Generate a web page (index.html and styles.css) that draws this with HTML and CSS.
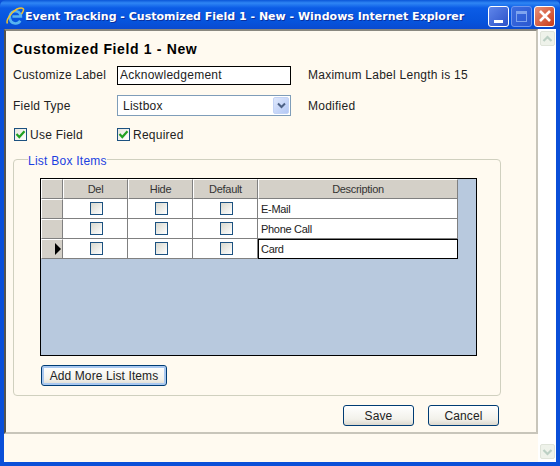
FILE: index.html
```html
<!DOCTYPE html>
<html lang="en">
<head>
  <meta charset="UTF-8">
  <title>Event Tracking - Customized Field 1 - New</title>
  <link rel="stylesheet" href="styles.css">
</head>
<body>
  <div class="window">
    <div class="titlebar">
      <svg class="ie-logo" width="20" height="20" viewBox="0 0 20 20">
        <path d="M5 12.500a5.600 5.600 0 1 1 10.900-2H7.400M5 12.500a5.600 5.600 0 0 0 10.300 2.300" fill="none" stroke="#58b4f0" stroke-width="2.600"/>
        <path d="M2.500 17.500C.500 15 6 6 12 3c3-1.500 6-1.500 6.500 0 .4 1.200-.6 3-2 5" fill="none" stroke="#f2c230" stroke-width="1.500"/>
      </svg>
      <span class="title">Event Tracking - Customized Field 1 - New - Windows Internet Explorer</span>
      <div class="caption-buttons">
        <div class="cap-btn"><span class="cap-min"></span></div>
        <div class="cap-btn cap-disabled"><span class="cap-max"></span></div>
        <div class="cap-btn cap-close">
          <svg width="14" height="14" viewBox="0 0 14 14"><path d="M2 2l10 10M12 2L2 12" stroke="#fff" stroke-width="2.600"/></svg>
        </div>
      </div>
    </div>

    <div class="client">
      <div class="main">
        <div class="panel">
          <h1>Customized Field 1 - New</h1>

          <div class="form-row row-label">
            <label class="field-label">Customize Label</label>
            <input class="text-input" type="text" value="Acknowledgement">
            <span class="note">Maximum Label Length is 15</span>
          </div>

          <div class="form-row row-type">
            <label class="field-label">Field Type</label>
            <div class="select">
              <span class="select-value">Listbox</span>
              <span class="select-arrow">
                <svg width="9" height="7" viewBox="0 0 9 7"><path d="M1 1.500l3.500 3.500 3.500-3.500" fill="none" stroke="#4d6185" stroke-width="2"/></svg>
              </span>
            </div>
            <span class="note">Modified</span>
          </div>

          <div class="form-row row-checks">
            <div class="check-item check-use">
              <span class="check">
                <svg width="11" height="11" viewBox="0 0 11 11"><path d="M1.500 5l2.800 3L9.500 2.200" fill="none" stroke="#21a121" stroke-width="2.200"/></svg>
              </span>
              <span>Use Field</span>
            </div>
            <div class="check-item">
              <span class="check">
                <svg width="11" height="11" viewBox="0 0 11 11"><path d="M1.500 5l2.800 3L9.500 2.200" fill="none" stroke="#21a121" stroke-width="2.200"/></svg>
              </span>
              <span>Required</span>
            </div>
          </div>

          <fieldset class="items-box">
            <legend>List Box Items</legend>
            <div class="grid-view">
              <div class="grid">
                <div class="cell head"></div>
                <div class="cell head">Del</div>
                <div class="cell head">Hide</div>
                <div class="cell head">Default</div>
                <div class="cell head">Description</div>

                <div class="cell row-head"></div>
                <div class="cell"><span class="box"></span></div>
                <div class="cell"><span class="box"></span></div>
                <div class="cell"><span class="box"></span></div>
                <div class="cell desc">E-Mail</div>

                <div class="cell row-head"></div>
                <div class="cell"><span class="box"></span></div>
                <div class="cell"><span class="box"></span></div>
                <div class="cell"><span class="box"></span></div>
                <div class="cell desc">Phone Call</div>

                <div class="cell row-head current"><span class="pointer"></span></div>
                <div class="cell"><span class="box"></span></div>
                <div class="cell"><span class="box"></span></div>
                <div class="cell"><span class="box"></span></div>
                <div class="cell desc active">Card</div>
              </div>
            </div>
            <button class="btn btn-add" type="button">Add More List Items</button>
          </fieldset>

          <div class="actions">
            <button class="btn btn-action" type="button">Save</button>
            <button class="btn btn-action" type="button">Cancel</button>
          </div>
        </div>
        <div class="statusbar"></div>
      </div>

      <div class="scrollbar">
        <div class="scroll-btn">
          <svg width="11" height="8" viewBox="0 0 11 8"><path d="M1.500 6l4-4 4 4" fill="none" stroke="#bcd0c4" stroke-width="2.200"/></svg>
        </div>
        <div class="scroll-btn">
          <svg width="11" height="8" viewBox="0 0 11 8"><path d="M1.500 2l4 4 4-4" fill="none" stroke="#bcd0c4" stroke-width="2.200"/></svg>
        </div>
      </div>
    </div>
  </div>
</body>
</html>
```

FILE: styles.css
```css
* {
  box-sizing: border-box;
}
body {
  margin: 0;
  font-family: "Liberation Sans", Arial, sans-serif;
  font-size: 12px;
  color: #222;
}
.window {
  width: 560px;
  height: 466px;
  display: flex;
  flex-direction: column;
  background: #0a4fd8;
  padding: 0 4px 4px;
}
.titlebar {
  height: 29px;
  flex: none;
  margin: 0 -4px;
  padding: 3px 5px 0 5px;
  display: flex;
  align-items: center;
  background: linear-gradient(#0a56d8 0, #2f86f4 3px, #0b5ce6 8px, #0653dc 22px, #0a4ad0 29px);
  border-radius: 6px 6px 0 0;
}
.ie-logo {
  flex: none;
}
.title {
  flex: 1;
  min-width: 0;
  font-family: "DejaVu Sans", sans-serif;
  font-size: 11px;
  font-weight: bold;
  color: #fff;
  white-space: nowrap;
  text-shadow: 1px 1px #0a2f9c;
}
.caption-buttons {
  display: flex;
  flex: none;
  gap: 2px;
}
.cap-btn {
  width: 21px;
  height: 21px;
  border: 1px solid #fff;
  border-radius: 3px;
  background: linear-gradient(135deg, #5f86ea, #2c52c8);
  position: relative;
  display: flex;
  align-items: center;
  justify-content: center;
}
.cap-disabled {
  border-color: #6f97ee;
  background: linear-gradient(135deg, #3c6ce0, #2a58d0);
}
.cap-close {
  background: linear-gradient(135deg, #e89078, #c83a18);
}
.cap-min {
  position: absolute;
  left: 5px;
  bottom: 3px;
  width: 9px;
  height: 3px;
  background: #fff;
}
.cap-max {
  width: 11px;
  height: 11px;
  border: 1px solid #7fa4ee;
  border-top-width: 3px;
}
.client {
  flex: 1;
  display: flex;
  min-height: 0;
  background: #fffaf0;
}
.main {
  flex: 1;
  display: flex;
  flex-direction: column;
  min-width: 0;
}
.panel {
  height: 405px;
  flex: none;
  background: #fffaf0;
  border-top: 2px solid #8a8880;
  border-left: 2px solid #55534d;
  border-right: 2px solid #c8c5ba;
  border-bottom: 2px solid #c8c5ba;
  padding: 0 0 0 7px;
}
.statusbar {
  flex: 1;
  background: #fffaf0;
}
.scrollbar {
  width: 18px;
  flex: none;
  background: #fff;
  display: flex;
  flex-direction: column;
  justify-content: space-between;
  align-items: center;
  padding: 2px 0 3px;
}
.scroll-btn {
  width: 15px;
  height: 15px;
  background: #eef2ea;
  border: 1px solid #dfe4da;
  border-radius: 2px;
  display: flex;
  align-items: center;
  justify-content: center;
}
h1 {
  margin: 0;
  padding-top: 10px;
  height: 34px;
  font-size: 14px;
  font-weight: bold;
  color: #000;
  letter-spacing: 0.65px;
}
.form-row {
  display: flex;
  align-items: center;
}
.field-label {
  width: 104px;
  flex: none;
  letter-spacing: 0.25px;
}
.row-label {
  height: 20px;
}
.row-type {
  margin-top: 10px;
  height: 21px;
}
.row-checks {
  margin-top: 10px;
  height: 17px;
}
.text-input {
  width: 174px;
  height: 19px;
  border: 1px solid #000;
  background: #fff;
  padding: 0 2px;
  font-family: inherit;
  font-size: 12px;
  letter-spacing: 0.25px;
  color: #222;
}
.note {
  margin-left: 17px;
  letter-spacing: 0.25px;
}
.select {
  width: 174px;
  height: 21px;
  border: 1px solid #7f9db9;
  background: #fff;
  display: flex;
  align-items: center;
  justify-content: space-between;
  padding: 1px;
}
.select-value {
  padding-left: 4px;
  letter-spacing: 0.25px;
}
.select-arrow {
  width: 16px;
  height: 17px;
  background: linear-gradient(135deg, #dfe8fc, #b4c8f5);
  border: 1px solid #c3d3f6;
  border-radius: 2px;
  display: flex;
  align-items: center;
  justify-content: center;
}
.check-item {
  display: flex;
  align-items: center;
  gap: 3px;
  letter-spacing: 0.25px;
}
.check-use {
  width: 104px;
  padding-left: 1px;
}
.check {
  width: 13px;
  height: 13px;
  border: 1px solid #1c5180;
  background: linear-gradient(135deg, #e6e5dd, #fff);
  display: flex;
  align-items: center;
  justify-content: center;
}
.items-box {
  margin: 7px 0 0;
  width: 488px;
  height: 246px;
  padding: 10px 0 0 26px;
  border: 1px solid #d0d0bf;
  border-radius: 4px;
}
.items-box legend {
  margin-left: -12px;
  padding: 5px 0 0;
  color: #1b3fe0;
  letter-spacing: 0.25px;
  line-height: 13px;
}
.grid-view {
  width: 437px;
  height: 178px;
  border: 1px solid #000;
  background: #b8c9de;
}
.grid {
  display: grid;
  grid-template-columns: 22px 65px 65px 65px 200px;
  grid-auto-rows: 20px;
  width: 417px;
}
.cell {
  background: #fff;
  border-right: 1px solid #808080;
  border-bottom: 1px solid #808080;
  display: flex;
  align-items: center;
  justify-content: center;
  font-size: 11px;
  letter-spacing: -0.3px;
  color: #222;
}
.head {
  background: #d4d0c8;
  border-top: 1px solid #fff;
  border-left: 1px solid #fff;
  color: #333;
}
.row-head {
  background: #d4d0c8;
  border-top: 1px solid #fff;
  border-left: 1px solid #fff;
}
.current {
  justify-content: flex-end;
  padding-right: 1px;
}
.pointer {
  width: 0;
  height: 0;
  border-left: 6px solid #000;
  border-top: 6px solid transparent;
  border-bottom: 6px solid transparent;
}
.desc {
  justify-content: flex-start;
  padding-left: 3px;
}
.active {
  border: 1px solid #000;
  padding-left: 2px;
}
.box {
  width: 13px;
  height: 13px;
  margin-left: 2px;
  border: 1px solid #1c5180;
  background: linear-gradient(135deg, #d8d8ce, #fff);
}
.btn {
  height: 21px;
  border: 1px solid #003c74;
  border-radius: 3px;
  background: linear-gradient(#fff, #f2f1ea 70%, #dcd8ce);
  font-family: inherit;
  font-size: 12px;
  letter-spacing: 0.1px;
  color: #222;
  padding: 0;
}
.btn-add {
  display: block;
  margin: 9px 0 0 1px;
  width: 126px;
  box-shadow: inset 0 0 0 2px #a9c8f0;
}
.actions {
  display: flex;
  justify-content: flex-end;
  gap: 14px;
  width: 486px;
  margin-top: 9px;
}
.btn-action {
  width: 71px;
}
```
